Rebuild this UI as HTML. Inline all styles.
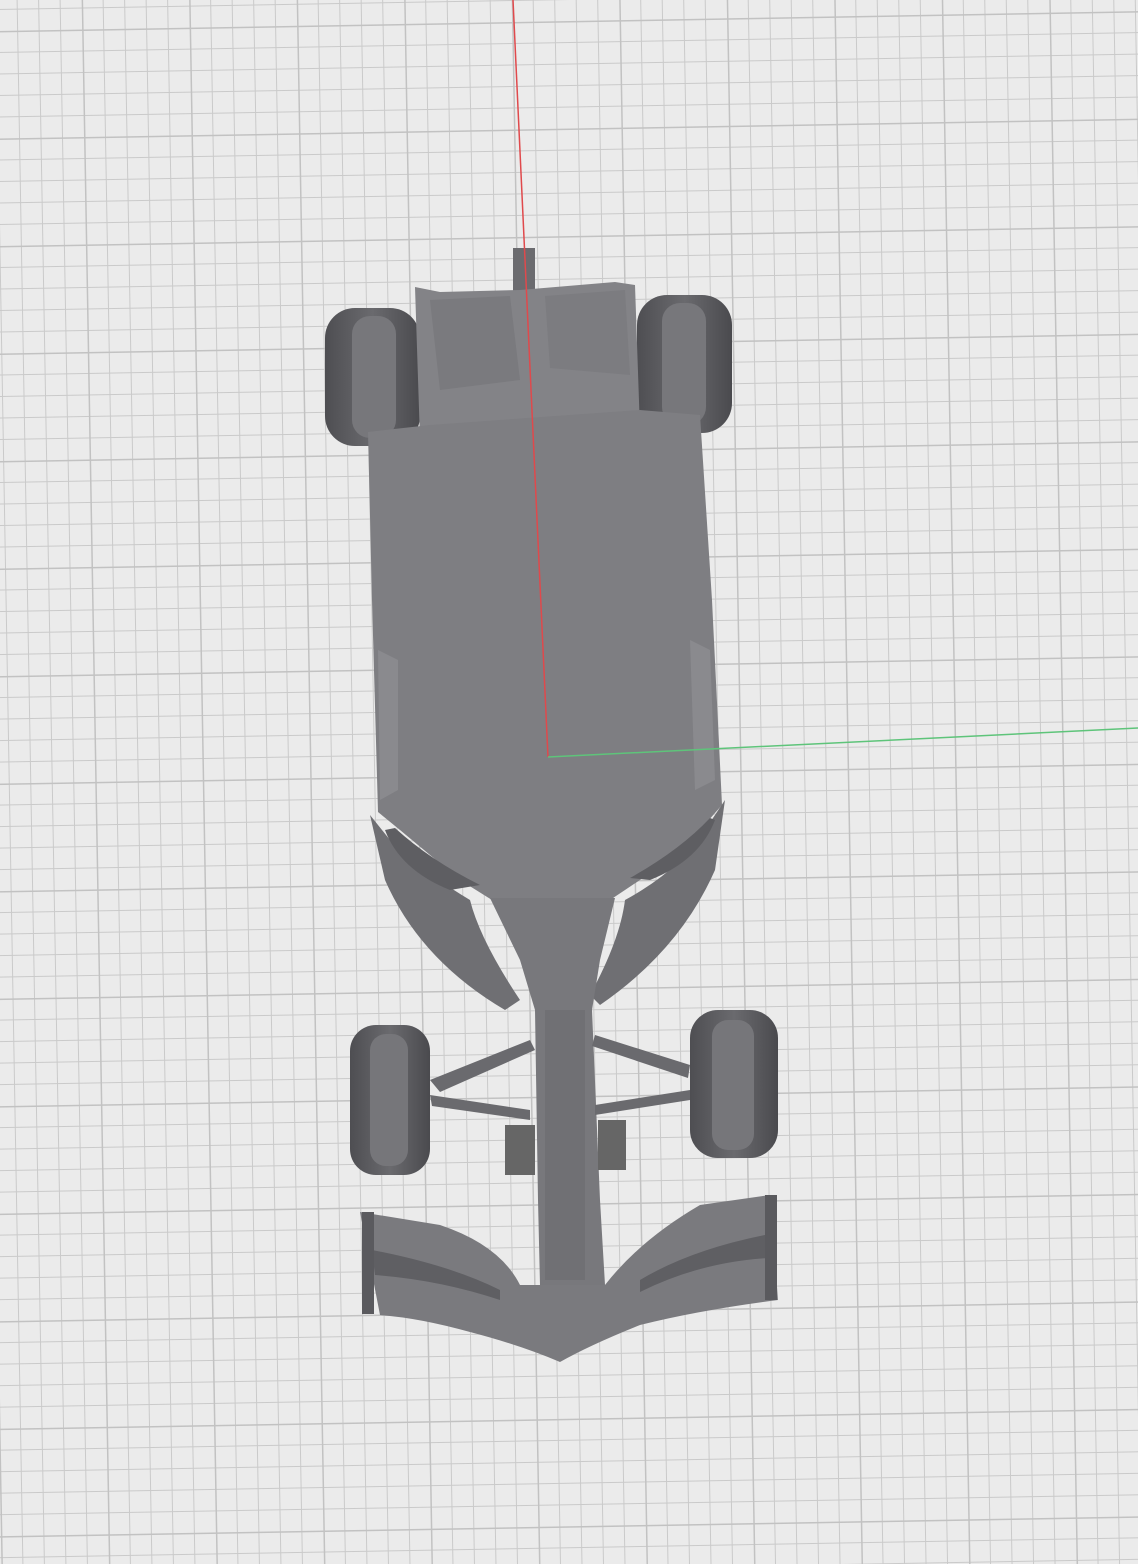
<!DOCTYPE html>
<html><head><meta charset="utf-8"><style>
html,body{margin:0;padding:0;background:#ebebeb;}
svg{display:block}
</style></head><body>
<svg width="1138" height="1564" viewBox="0 0 1138 1564" xmlns="http://www.w3.org/2000/svg">
<defs>
<pattern id="G" width="107.5" height="107.5" patternUnits="userSpaceOnUse" patternTransform="translate(84,137) rotate(-1)">
<path d="M0 21.5H107.5M0 43H107.5M0 64.5H107.5M0 86H107.5M21.5 0V107.5M43 0V107.5M64.5 0V107.5M86 0V107.5" stroke="#cacaca" stroke-width="1" fill="none"/>
<path d="M0 0.5H107.5M0.5 0V107.5" stroke="#c2c2c2" stroke-width="2" fill="none"/>
</pattern>
<linearGradient id="tyre" x1="0" x2="1">
<stop offset="0" stop-color="#4e4e52"/><stop offset="0.5" stop-color="#6a6a6e"/><stop offset="1" stop-color="#4a4a4e"/>
</linearGradient>
</defs>
<rect width="1138" height="1564" fill="#ebebeb"/>
<rect width="1138" height="1564" fill="url(#G)"/>

<rect x="325" y="308" width="95" height="138" rx="30" fill="url(#tyre)"/>
<rect x="637" y="295" width="95" height="138" rx="30" fill="url(#tyre)"/>
<rect x="352" y="316" width="44" height="122" rx="18" fill="#77777b"/>
<rect x="662" y="303" width="44" height="122" rx="18" fill="#77777b"/>

<rect x="513" y="248" width="22" height="45" fill="#6b6b6f"/>
<polygon points="415,287 440,292 520,290 615,282 635,285 640,430 420,440" fill="#838387"/>
<polygon points="430,300 510,296 520,380 440,390" fill="#7a7a7e"/>
<polygon points="545,296 625,290 630,375 550,368" fill="#7c7c80"/>

<polygon points="368,432 430,425 640,410 700,415 712,600 722,805 700,830 640,880 610,900 560,910 500,905 460,880 400,830 378,812 372,600" fill="#7e7e82"/>
<polygon points="378,650 398,660 398,790 380,800" fill="#8a8a8e"/>
<polygon points="690,640 710,650 715,780 695,790" fill="#8a8a8e"/>

<path d="M370,815 L385,880 Q420,960 505,1010 L520,1000 Q480,940 470,900 Q420,870 390,840 Z" fill="#6f6f73"/>
<path d="M725,800 L715,870 Q680,950 600,1005 L590,995 Q620,940 625,900 Q680,870 705,830 Z" fill="#6f6f73"/>
<path d="M385,830 Q400,870 450,890 L480,885 Q430,860 395,828 Z" fill="#5e5e62"/>
<path d="M715,820 Q700,860 650,880 L630,878 Q680,850 710,818 Z" fill="#5e5e62"/>

<polygon points="490,898 615,898 600,960 592,1010 600,1200 605,1285 540,1285 538,1200 535,1010 520,960" fill="#78787c"/>
<rect x="545" y="1010" width="40" height="270" fill="#707074"/>

<path d="M430,1080 L530,1040 L535,1050 L440,1092 Z" fill="#6a6a6e"/>
<path d="M430,1095 L530,1110 L530,1120 L432,1106 Z" fill="#6a6a6e"/>
<path d="M690,1065 L595,1035 L592,1046 L688,1078 Z" fill="#6a6a6e"/>
<path d="M690,1090 L595,1105 L595,1115 L690,1100 Z" fill="#6a6a6e"/>
<rect x="505" y="1125" width="30" height="50" fill="#666"/>
<rect x="598" y="1120" width="28" height="50" fill="#666"/>

<rect x="350" y="1025" width="80" height="150" rx="26" fill="url(#tyre)"/>
<rect x="690" y="1010" width="88" height="148" rx="28" fill="url(#tyre)"/>
<rect x="370" y="1034" width="38" height="132" rx="16" fill="#76767a"/>
<rect x="712" y="1020" width="42" height="130" rx="16" fill="#76767a"/>

<path d="M360,1212 L440,1225 Q500,1245 520,1285 L605,1285 Q640,1240 700,1205 L770,1195 L778,1300 Q700,1310 640,1325 Q590,1345 560,1362 Q520,1345 470,1332 Q420,1318 380,1315 Z" fill="#7a7a7e"/>
<path d="M372,1250 Q450,1265 500,1290 L500,1300 Q440,1280 375,1275 Z" fill="#5f5f63"/>
<path d="M765,1235 Q690,1250 640,1280 L640,1292 Q700,1262 768,1258 Z" fill="#5f5f63"/>
<rect x="362" y="1212" width="12" height="102" fill="#5a5a5e"/>
<rect x="765" y="1195" width="12" height="105" fill="#5a5a5e"/>

<line x1="513" y1="0" x2="548" y2="757" stroke="#e0494c" stroke-width="1.5"/>
<line x1="548" y1="757" x2="1138" y2="728" stroke="#5ec47a" stroke-width="1.5"/>
</svg>
</body></html>
